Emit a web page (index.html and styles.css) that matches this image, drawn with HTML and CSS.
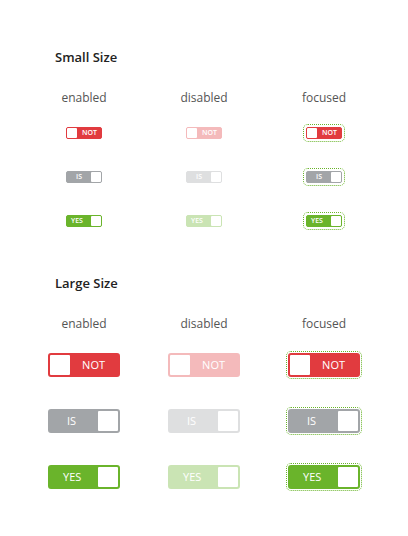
FILE: index.html
```html
<!DOCTYPE html>
<html lang="en">

<head>
    <meta charset="UTF-8">
    <meta name="viewport" content="width=device-width, initial-scale=1.0">
    <title>Toggle states</title>
    <link rel="stylesheet" href="styles.css">
</head>

<body>
    <!-- small toggles -->
    <section class="group group-small">
        <h2 class="group-title">Small Size</h2>
        <div class="grid">
            <div class="label">enabled</div>
            <div class="label">disabled</div>
            <div class="label">focused</div>

            <div class="cell"><span class="toggle sm off">NOT</span></div>
            <div class="cell"><span class="toggle sm off disabled">NOT</span></div>
            <div class="cell"><span class="toggle sm off focused">NOT</span></div>

            <div class="cell"><span class="toggle sm mid">IS</span></div>
            <div class="cell"><span class="toggle sm mid disabled">IS</span></div>
            <div class="cell"><span class="toggle sm mid focused">IS</span></div>

            <div class="cell"><span class="toggle sm on">YES</span></div>
            <div class="cell"><span class="toggle sm on disabled">YES</span></div>
            <div class="cell"><span class="toggle sm on focused">YES</span></div>
        </div>
    </section>

    <!-- large toggles -->
    <section class="group group-large">
        <h2 class="group-title">Large Size</h2>
        <div class="grid">
            <div class="label">enabled</div>
            <div class="label">disabled</div>
            <div class="label">focused</div>

            <div class="cell"><span class="toggle lg off">NOT</span></div>
            <div class="cell"><span class="toggle lg off disabled">NOT</span></div>
            <div class="cell"><span class="toggle lg off focused">NOT</span></div>

            <div class="cell"><span class="toggle lg mid">IS</span></div>
            <div class="cell"><span class="toggle lg mid disabled">IS</span></div>
            <div class="cell"><span class="toggle lg mid focused">IS</span></div>

            <div class="cell"><span class="toggle lg on">YES</span></div>
            <div class="cell"><span class="toggle lg on disabled">YES</span></div>
            <div class="cell"><span class="toggle lg on focused">YES</span></div>
        </div>
    </section>
</body>

</html>
```

FILE: styles.css
```css
* {
    margin: 0;
    padding: 0;
    box-sizing: border-box;
}

body {
    background: #fff;
    font-family: "Open Sans", "Noto Sans", sans-serif;
    color: #333;
}

.group {
    padding-left: 24px;
}

.group-small {
    padding-top: 48px;
}

.group-large {
    padding-top: 15px;
}

.group-title {
    margin-left: 31px;
    font-size: 13px;
    line-height: 18px;
    font-weight: 600;
    color: #222;
}

.grid {
    display: grid;
    grid-template-columns: repeat(3, 120px);
    margin-top: 24px;
}

.label {
    text-align: center;
    font-size: 12px;
    line-height: 16px;
    color: #555;
}

.cell {
    display: flex;
    justify-content: center;
    align-items: flex-start;
}

.group-small .label {
    margin-bottom: 21px;
}

.group-small .cell {
    height: 44px;
}

.group-large .label {
    margin-bottom: 21px;
}

.group-large .cell {
    height: 56px;
}

/* toggle */
.toggle {
    display: flex;
    align-items: center;
    color: #fff;
    border-style: solid;
}

.toggle::before {
    content: "";
    background: #fff;
    flex: none;
}

.toggle.on::before,
.toggle.mid::before {
    order: 2;
}

.toggle.off {
    background: #e13b3f;
    border-color: #e13b3f;
}

.toggle.mid {
    background: #a2a5a8;
    border-color: #a2a5a8;
}

.toggle.on {
    background: #6ab42b;
    border-color: #6ab42b;
}

.toggle.disabled {
    opacity: .35;
}

.toggle.focused {
    outline: 1px dotted #6ab42b;
    outline-offset: 1px;
}

.toggle.sm.focused {
    outline-offset: 2px;
}

.toggle.sm {
    width: 36px;
    height: 12px;
    border-width: 1px;
    border-radius: 2px;
    font-size: 7px;
    font-weight: 600;
    line-height: 10px;
    justify-content: space-between;
}

.toggle.sm::before {
    width: 10px;
    height: 10px;
    border-radius: 1px;
}

.toggle.lg {
    width: 72px;
    height: 24px;
    border-width: 2px;
    border-radius: 3px;
    font-size: 11px;
    line-height: 20px;
    justify-content: space-between;
}

.toggle.lg::before {
    width: 20px;
    height: 20px;
    border-radius: 1px;
}

.toggle.sm.off {
    padding-right: 4px;
}

.toggle.sm.mid {
    padding-left: 9px;
}

.toggle.sm.on {
    padding-left: 4px;
}

.toggle.lg.off {
    padding-right: 13px;
}

.toggle.lg.mid {
    padding-left: 17px;
}

.toggle.lg.on {
    padding-left: 13px;
}
```
